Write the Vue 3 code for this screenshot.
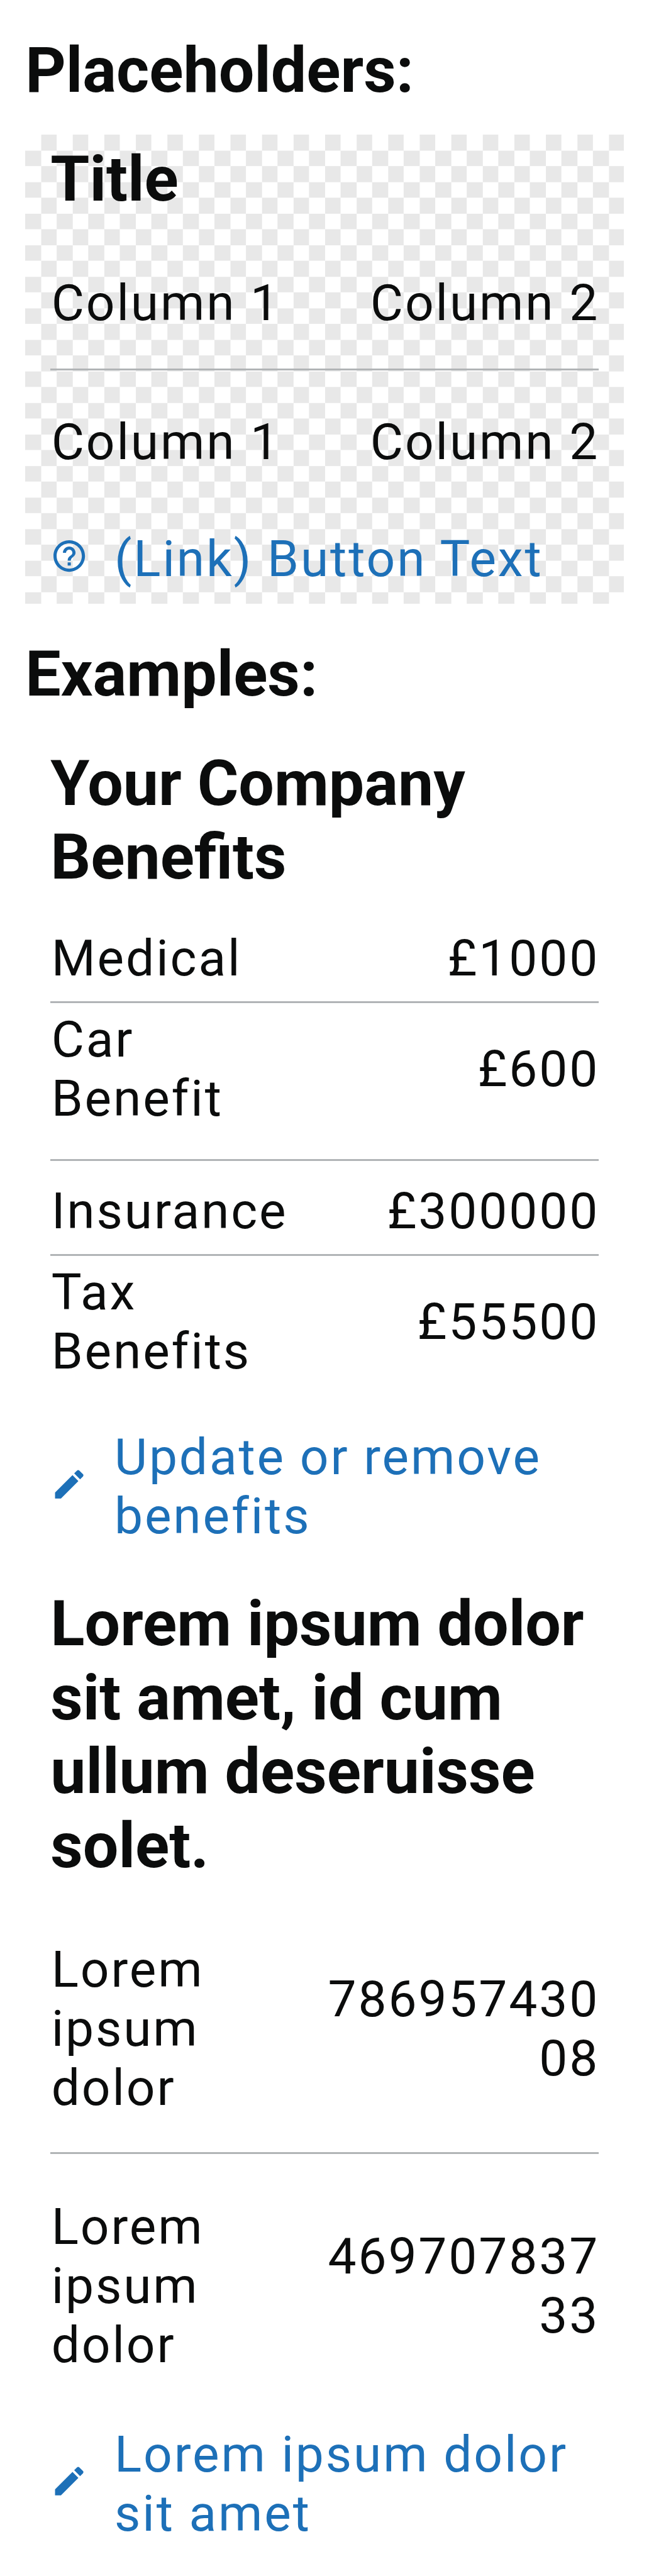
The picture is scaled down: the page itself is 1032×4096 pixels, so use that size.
<script setup>
const cards = [
  {
    name: 'placeholder',
    title: 'Title',
    rows: [
      { label: 'Column 1', value: 'Column 2' },
      { label: 'Column 1', value: 'Column 2' },
    ],
    icon: 'help',
    link: '(Link) Button Text',
  },
  {
    name: 'company',
    title: 'Your Company Benefits',
    rows: [
      { label: 'Medical', value: '£1000' },
      { label: 'Car Benefit', value: '£600' },
      { label: 'Insurance', value: '£300000' },
      { label: 'Tax Benefits', value: '£55500' },
    ],
    icon: 'edit',
    link: 'Update or remove benefits',
  },
  {
    name: 'lorem',
    title: 'Lorem ipsum dolor sit amet, id cum ullum deseruisse solet.',
    rows: [
      { label: 'Lorem ipsum dolor', value: '78695743008' },
      { label: 'Lorem ipsum dolor', value: '46970783733' },
    ],
    icon: 'edit',
    link: 'Lorem ipsum dolor sit amet',
  },
]

const groups = [
  { heading: 'Placeholders:', cards: cards.slice(0, 1) },
  { heading: 'Examples:', cards: cards.slice(1) },
]

const icons = {
  help: 'M11 18h2v-2h-2v2zm1-16C6.48 2 2 6.48 2 12s4.48 10 10 10 10-4.48 10-10S17.52 2 12 2zm0 18c-4.41 0-8-3.59-8-8s3.59-8 8-8 8 3.59 8 8-3.59 8-8 8zm0-14c-2.21 0-4 1.79-4 4h2c0-1.1.9-2 2-2s2 .9 2 2c0 2-3 1.75-3 5h2c0-2.25 3-2.5 3-5 0-2.21-1.79-4-4-4z',
  edit: 'M3 17.25V21h3.75L17.81 9.94l-3.75-3.75L3 17.25zM20.71 7.04c.39-.39.39-1.02 0-1.41l-2.34-2.34c-.39-.39-1.02-.39-1.41 0l-1.83 1.83 3.75 3.75 1.83-1.83z',
}
</script>

<template>
  <main class="page">
    <section v-for="group in groups" :key="group.heading" class="group">
      <h1 class="heading">{{ group.heading }}</h1>
      <article v-for="card in group.cards" :key="card.name" class="card" :class="card.name">
        <h2 class="title">{{ card.title }}</h2>
        <dl class="rows">
          <div v-for="(row, i) in card.rows" :key="i" class="row">
            <dt class="label">{{ row.label }}</dt>
            <dd class="value">{{ row.value }}</dd>
          </div>
        </dl>
        <a class="link">
          <svg class="icon" viewBox="0 0 24 24" aria-hidden="true"><path :d="icons[card.icon]" /></svg>
          <span>{{ card.link }}</span>
        </a>
      </article>
    </section>
  </main>
</template>

<style>
html {
  font-size: 71.66667px;
  background: #fff;
}
</style>

<style scoped>
.page {
  box-sizing: border-box;
  height: 4096px;
  overflow: hidden;
  padding: 0.74rem 0.56rem 0;
  font-family: Roboto, sans-serif;
  color: #0b0c0c;
}
.heading,
.title {
  margin: 0;
  font-size: 1.4rem;
  line-height: 1.6406rem;
  font-weight: 700;
}
.card {
  box-sizing: border-box;
  padding: 0.175rem 0.56rem 0;
}
.rows {
  margin: 0;
}
.row {
  display: flex;
  justify-content: space-between;
  align-items: center;
  font-size: 1.12rem;
  line-height: 1.3125rem;
  letter-spacing: 0.04rem;
}
.row + .row {
  border-top: 3px solid #b1b4b6;
}
.label {
  max-width: 5.62rem;
  padding-left: 0.02rem;
}
.value {
  width: 6.42rem;
  margin: 0 -0.02rem 0 0;
  text-align: right;
  overflow-wrap: anywhere;
}
.link {
  display: flex;
  align-items: center;
  gap: 0.58rem;
  font-size: 1.12rem;
  line-height: 1.3125rem;
  letter-spacing: 0.04rem;
  color: #1d70b8;
}
.icon {
  flex: none;
  width: 0.84rem;
  height: 0.84rem;
  margin-bottom: 0.13rem;
  fill: currentColor;
}

.placeholder {
  height: 10.42rem;
  margin: 0.6rem 0 0.74rem;
  background: conic-gradient(#e8e8e8 0 25%, #fff 0 50%, #e8e8e8 0 75%, #fff 0) 0 0 / 0.7rem 0.7rem;
}
.placeholder .row {
  padding: 1.275rem 0 0.788rem;
}
.placeholder .row + .row {
  padding: 0.945rem 0 1.28rem;
}

.company {
  margin-top: 0.6rem;
}
.company .row {
  padding: 0.77rem 0 0.29rem;
}
.company .row:nth-child(2) {
  padding: 0.158rem 0 0.688rem;
}
.company .row:nth-child(3) {
  padding: 0.453rem 0 0.288rem;
}
.company .row:nth-child(4) {
  padding: 0.16rem 0 1.035rem;
}

.lorem {
  margin-top: 0.728rem;
}
.lorem .row {
  padding: 1.28rem 0 0.765rem;
}
.lorem .row + .row {
  padding: 0.961rem 0 1.115rem;
}
</style>
